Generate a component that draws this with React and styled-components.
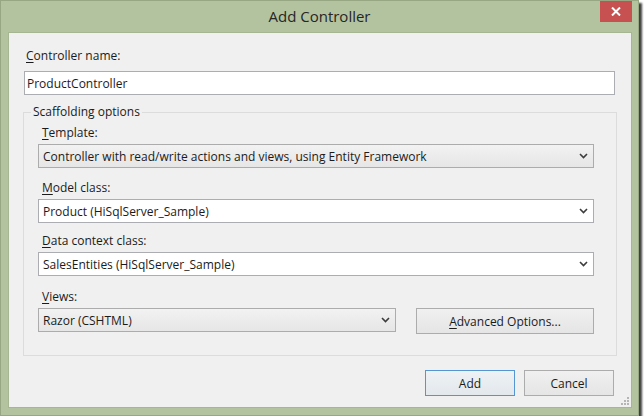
import React from 'react';
import styled, { createGlobalStyle } from 'styled-components';

const Global = createGlobalStyle`
  html, body {
    margin: 0;
    padding: 0;
    background: #ffffff;
  }
  body {
    font-family: "Open Sans", "Noto Sans", sans-serif;
    font-size: 12px;
    color: #1b1b1b;
  }
  * {
    box-sizing: border-box;
  }
`;

const Window = styled.div`
  position: relative;
  display: flex;
  flex-direction: column;
  width: 639px;
  height: 416px;
  background: #b4c39f;
  border: 1px solid #97a683;
  box-shadow: 3px 3px 2px rgba(0, 0, 0, 0.75);
`;

const TitleBar = styled.div`
  position: relative;
  height: 31px;
  flex: none;
  display: flex;
  align-items: center;
  justify-content: center;
  font-size: 15px;
  color: #262626;
  padding-bottom: 2px;
`;

const CloseButton = styled.div`
  position: absolute;
  top: 0;
  right: 6px;
  width: 32px;
  height: 21px;
  background: #c75050;
  display: flex;
  align-items: center;
  justify-content: center;
`;

const Client = styled.div`
  position: relative;
  flex: 1;
  margin: 0 6px 7px 7px;
  background: #f0f0f0;
  border: 1px solid #a6b592;
  padding: 15px 14px 11px 14px;
  display: flex;
  flex-direction: column;
`;

const Label = styled.div`
  line-height: 16px;
  margin-left: ${p => p.$indent || 3}px;
  white-space: nowrap;
`;

const Key = styled.span`
  text-decoration: underline;
  text-underline-offset: 2px;
`;

const TextBox = styled.div`
  height: 24px;
  margin: 7px 2px 0 1px;
  background: #ffffff;
  border: 1px solid #abadb3;
  padding: 0 2px;
  display: flex;
  align-items: center;
`;

const Group = styled.fieldset`
  margin: 9px 0 0 0;
  border: 1px solid #dcdcdc;
  padding: 5px 22px 21px 14px;
  display: flex;
  flex-direction: column;
  gap: 12px;
`;

const Legend = styled.legend`
  padding: 0 2px;
  margin-left: -7px;
  line-height: 16px;
`;

const Field = styled.div`
  display: flex;
  flex-direction: column;
  gap: 3px;
  margin-top: ${p => p.$shift || 0}px;
`;

const Combo = styled.div`
  height: 24px;
  border: 1px solid ${p => (p.$editable ? '#abadb3' : '#acacac')};
  background: ${p =>
    p.$editable ? '#ffffff' : 'linear-gradient(#f2f2f2, #e6e6e6)'};
  display: flex;
  align-items: center;
  padding: 0 0 0 4px;
`;

const ComboText = styled.span`
  flex: 1;
  white-space: nowrap;
  overflow: hidden;
`;

const Arrow = styled.span`
  width: 17px;
  height: 100%;
  display: flex;
  align-items: center;
  justify-content: center;
  margin-right: 1px;
`;

const ViewsRow = styled.div`
  display: grid;
  grid-template-columns: 358px 178px;
  grid-template-rows: 16px auto;
  column-gap: 20px;
  row-gap: 3px;
  align-items: start;
  margin-top: 1px;
`;

const Button = styled.div`
  height: 26px;
  width: ${p => p.$width || 90}px;
  border: 1px solid ${p => (p.$default ? '#5596d2' : '#acacac')};
  background: ${p =>
    p.$default
      ? 'linear-gradient(#eef2f5, #e3e8ec)'
      : 'linear-gradient(#f0f0f0, #e5e5e5)'};
  display: flex;
  align-items: center;
  justify-content: center;
  white-space: nowrap;
`;

const Footer = styled.div`
  display: flex;
  justify-content: flex-end;
  gap: 9px;
  margin: 14px 3px 0 0;
`;

const Grip = styled.svg`
  position: absolute;
  right: 1px;
  bottom: 1px;
`;

const Chevron = () => (
  <svg width="9" height="6" viewBox="0 0 9 6">
    <path d="M1 1 L4.5 4.5 L8 1" fill="none" stroke="#3c3c3c" strokeWidth="1.6" />
  </svg>
);

const Select = ({ children, editable }) => (
  <Combo $editable={editable}>
    <ComboText>{children}</ComboText>
    <Arrow>
      <Chevron />
    </Arrow>
  </Combo>
);

export default function App() {
  return (
    <>
      <Global />
      <Window>
        <TitleBar>
          Add Controller
          <CloseButton>
            <svg width="10" height="9" viewBox="0 0 10 9">
              <path d="M1 0.5 L9 8.5 M9 0.5 L1 8.5" stroke="#ffffff" strokeWidth="2" />
            </svg>
          </CloseButton>
        </TitleBar>
        <Client>
          <Label>
            <Key>C</Key>ontroller name:
          </Label>
          <TextBox>ProductController</TextBox>

          <Group>
            <Legend>Scaffolding options</Legend>
            <Field>
              <Label $indent={4}>
                <Key>T</Key>emplate:
              </Label>
              <Select>Controller with read/write actions and views, using Entity Framework</Select>
            </Field>
            <Field>
              <Label $indent={4}>
                <Key>M</Key>odel class:
              </Label>
              <Select editable>Product (HiSqlServer_Sample)</Select>
            </Field>
            <Field $shift={-2}>
              <Label $indent={4}>
                <Key>D</Key>ata context class:
              </Label>
              <Select editable>SalesEntities (HiSqlServer_Sample)</Select>
            </Field>
            <ViewsRow>
              <Label $indent={4}>
                <Key>V</Key>iews:
              </Label>
              <span />
              <Select>Razor (CSHTML)</Select>
              <Button $width={178}>
                <Key>A</Key>dvanced Options...
              </Button>
            </ViewsRow>
          </Group>

          <Footer>
            <Button $default>Add</Button>
            <Button>Cancel</Button>
          </Footer>

          <Grip width="9" height="9" viewBox="0 0 9 9">
            <g fill="#b5b5b5">
              <rect x="6" y="0" width="2" height="2" />
              <rect x="3" y="3" width="2" height="2" />
              <rect x="6" y="3" width="2" height="2" />
              <rect x="0" y="6" width="2" height="2" />
              <rect x="3" y="6" width="2" height="2" />
              <rect x="6" y="6" width="2" height="2" />
            </g>
          </Grip>
        </Client>
      </Window>
    </>
  );
}
